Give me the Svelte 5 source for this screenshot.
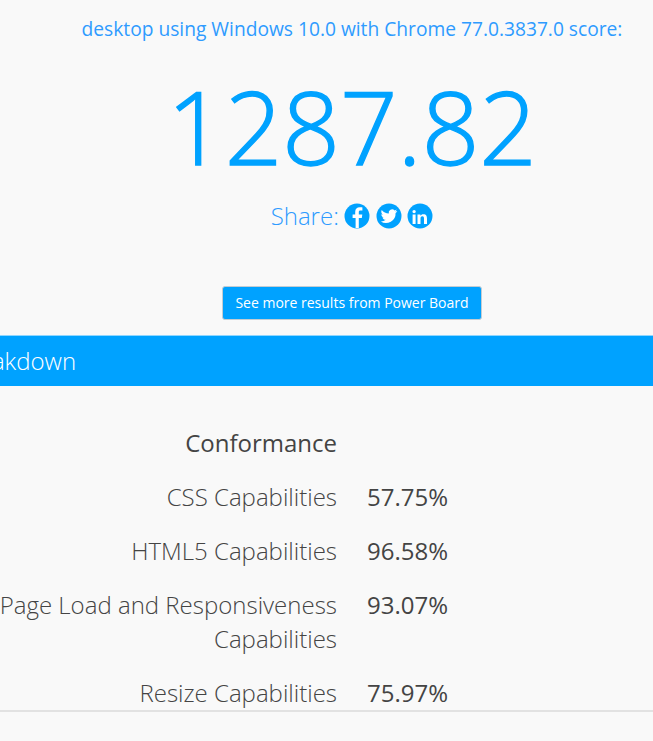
<script lang="ts">
  const rows = [
    { label: 'CSS Capabilities', value: '57.75%' },
    { label: 'HTML5 Capabilities', value: '96.58%' },
    { label: 'Page Load and Responsiveness Capabilities', value: '93.07%' },
    { label: 'Resize Capabilities', value: '75.97%' },
  ];
</script>

<div class="page">
  <main class="content">
    <p class="agent">desktop using Windows 10.0 with Chrome 77.0.3837.0 score:</p>
    <h1 class="score">1287.82</h1>
    <div class="share">
      <span>Share:</span>
      <svg class="icon" viewBox="0 0 26 26" aria-label="Facebook">
        <circle cx="13" cy="13" r="12.5" fill="#00a2ff" />
        <path fill="#fff" d="M14.800 25v-10h3l.5-3.500h-3.500V9.200c0-1 .3-1.700 1.800-1.700h1.800V4.400c-.3 0-1.400-.1-2.700-.1-2.700 0-4.500 1.600-4.500 4.600v2.600H8.600V15h3v10z" />
      </svg>
      <svg class="icon" viewBox="0 0 26 26" aria-label="Twitter">
        <circle cx="13" cy="13" r="12.5" fill="#00a2ff" />
        <path fill="#fff" transform="translate(13 13) scale(1.1) translate(-13 -13)" d="M20.500 8.400c-.6.300-1.200.4-1.800.5.600-.4 1.100-1 1.400-1.700-.6.400-1.300.6-2 .8a3.100 3.100 0 0 0-5.300 2.800c-2.600-.1-4.900-1.400-6.400-3.300-.8 1.400-.4 3.200 1 4.200-.5 0-1-.2-1.400-.4 0 1.500 1.100 2.800 2.500 3.100-.5.100-.9.100-1.400 0 .4 1.200 1.500 2.100 2.900 2.100A6.200 6.200 0 0 1 5.500 18a8.800 8.800 0 0 0 13.500-7.800c.6-.4 1.100-1 1.500-1.800z" />
      </svg>
      <svg class="icon" viewBox="0 0 26 26" aria-label="LinkedIn">
        <circle cx="13" cy="13" r="12.5" fill="#00a2ff" />
        <path fill="#fff" d="M5.600 11.500h3V21h-3zM7.100 6.900a1.700 1.700 0 1 1 0 3.400 1.700 1.700 0 0 1 0-3.400zM10.500 11.500h2.900v1.300c.5-.9 1.500-1.600 3-1.600 3 0 3.600 2 3.600 4.500V21h-3v-5c0-1.200 0-2.700-1.600-2.700s-1.900 1.200-1.900 2.600V21h-3z" />
      </svg>
    </div>
    <a class="button" href="#results">See more results from Power Board</a>
  </main>

  <h2 class="banner"><span>Score Breakdown</span></h2>

  <section class="table">
    <div class="heading">Conformance</div>
    <div></div>
    {#each rows as row}
      <div class="label">{row.label}</div>
      <div class="value">{row.value}</div>
    {/each}
  </section>

  <div class="rule"></div>
</div>

<style>
  :global(body) {
    background: #f9f9f9;
  }

  .page {
    width: 653px;
    height: 741px;
    overflow: hidden;
    background: #f9f9f9;
    font-family: "Open Sans", sans-serif;
    color: #444;
    display: flex;
    flex-direction: column;
  }

  .content {
    display: flex;
    flex-direction: column;
    align-items: center;
    width: 704px;
    margin-right: -51px;
  }

  .agent {
    margin: 17px 0 0;
    font-size: 19.2px;
    line-height: 24px;
    color: #2e9bff;
  }

  .score {
    margin: 21px 0 0;
    font-size: 101px;
    font-weight: 300;
    -webkit-text-stroke: 1.4px #00a2ff;
    line-height: 128px;
    color: #00a2ff;
  }

  .share {
    display: flex;
    align-items: center;
    gap: 5.5px;
    margin-top: 9px;
    font-size: 24px;
    font-weight: 300;
    line-height: 34px;
    color: #2e9bff;
  }

  .icon {
    width: 26px;
    height: 26px;
  }

  .button {
    margin-top: 53px;
    padding: 0 12px;
    height: 32px;
    line-height: 32px;
    background: #00a2ff;
    border: 1px solid #c4ccd2;
    border-radius: 3px;
    color: #fff;
    font-size: 14px;
    text-decoration: none;
  }

  .banner {
    margin: 15px 0 0;
    height: 50px;
    line-height: 50px;
    background: #00a2ff;
    border-top: 1px solid #8fd6ff;
    color: #fff;
    font-size: 24px;
    font-weight: 300;
    white-space: nowrap;
  }

  .banner span {
    display: block;
    margin-left: -113px;
  }

  .table {
    display: grid;
    grid-template-columns: 388px 1fr;
    column-gap: 30px;
    row-gap: 20px;
    margin: 40px 0 0 -51px;
    font-size: 24px;
    line-height: 34px;
    height: 284px;
    overflow: hidden;
    flex: none;
  }

  .heading,
  .label {
    text-align: right;
  }

  .label {
    font-weight: 300;
  }

  .rule {
    border-top: 2px solid #e2e2e2;
  }
</style>
